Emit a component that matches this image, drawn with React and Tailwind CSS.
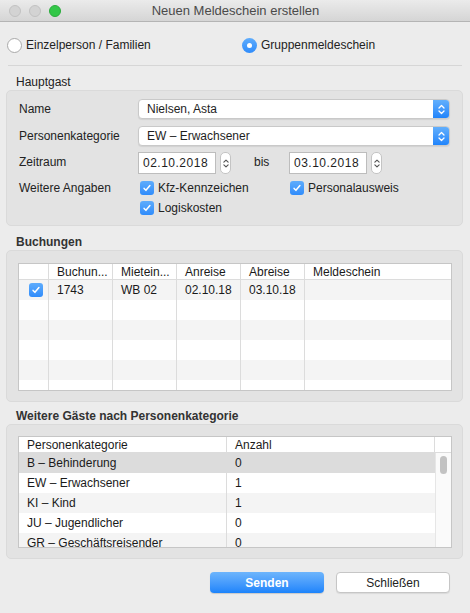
import React from "react";

// ICONS
const Check = () => (
  <svg viewBox="0 0 12 12" className="w-[10px] h-[10px]" fill="none" stroke="white" strokeWidth="1.8" strokeLinecap="round" strokeLinejoin="round">
    <path d="M2.5 6.5l2.2 2.3L9.5 3" />
  </svg>
);

const Checkbox = () => (
  <div className="w-[14px] h-[14px] rounded-[3px] bg-gradient-to-b from-[#5eacfc] to-[#2f8cfb] flex items-center justify-center shrink-0">
    <Check />
  </div>
);

const UpDown = ({ color = "white", className = "w-[7px] h-[11px]" }) => (
  <svg viewBox="0 0 7 11" className={className} fill="none" stroke={color} strokeWidth="1.3" strokeLinecap="round" strokeLinejoin="round">
    <path d="M1 4l2.5-2.5L6 4" />
    <path d="M1 7l2.5 2.5L6 7" />
  </svg>
);

const Select = ({ value }) => (
  <div className="w-[312px] h-[20px] bg-white rounded-[4px] border border-[#c9c9c9] shadow-[0_1px_1px_rgba(0,0,0,0.08)] flex items-center overflow-hidden">
    <span className="flex-1 pl-[8px] text-[12px] text-[#1e1e1e]">{value}</span>
    <div className="w-[16px] h-full bg-gradient-to-b from-[#62affc] to-[#1f84fb] flex items-center justify-center">
      <UpDown />
    </div>
  </div>
);

const DateField = ({ value }) => (
  <div className="flex items-center gap-[4px]">
    <div className="w-[78px] h-[22px] bg-white border border-[#bdbdbd] flex items-center pl-[4px] text-[12px] tracking-[0.5px] text-[#1e1e1e]">
      {value}
    </div>
    <div className="w-[11px] h-[22px] bg-white border border-[#c4c4c4] rounded-[5px] flex items-center justify-center">
      <UpDown color="#555" className="w-[6px] h-[11px]" />
    </div>
  </div>
);

const bookingCols = [
  { label: "", w: "w-[30px]" },
  { label: "Buchun...", w: "w-[64px]" },
  { label: "Mietein...", w: "w-[64px]" },
  { label: "Anreise", w: "w-[64px]" },
  { label: "Abreise", w: "w-[64px]" },
  { label: "Meldeschein", w: "flex-1" },
];

const guests = [
  ["B – Behinderung", "0"],
  ["EW – Erwachsener", "1"],
  ["KI – Kind", "1"],
  ["JU – Jugendlicher", "0"],
  ["GR – Geschäftsreisender", "0"],
];

export default function App() {
  return (
    <div className="w-[470px] h-[613px] bg-[#ececec] flex flex-col overflow-hidden text-[#222] font-['Liberation_Sans',Arial,sans-serif]">
      {/* TITLE BAR */}
      <header className="h-[22px] shrink-0 bg-gradient-to-b from-[#ebebeb] to-[#d5d5d5] border-b border-[#b4b4b4] flex items-center relative">
        <div className="flex items-center gap-[8px] pl-[9px]">
          <span className="w-[12px] h-[12px] rounded-full bg-[#d3d3d3] border border-[#c2c2c2]" />
          <span className="w-[12px] h-[12px] rounded-full bg-[#d3d3d3] border border-[#c2c2c2]" />
          <span className="w-[12px] h-[12px] rounded-full bg-[#33c748] border border-[#2aac3c]" />
        </div>
        <div className="flex-1 text-center text-[13px] text-[#4a4a4a] pr-[60px]">Neuen Meldeschein erstellen</div>
      </header>

      {/* RADIO ROW */}
      <div className="h-[43px] shrink-0 flex items-center pt-[3px] px-[7px] text-[12px]">
        <div className="flex items-center gap-[4px] w-[235px]">
          <span className="w-[15px] h-[15px] rounded-full bg-white border border-[#a9a9a9]" />
          <span>Einzelperson / Familien</span>
        </div>
        <div className="flex items-center gap-[4px]">
          <span className="w-[15px] h-[15px] rounded-full bg-gradient-to-b from-[#5eacfc] to-[#2f8cfb] flex items-center justify-center">
            <span className="w-[5px] h-[5px] rounded-full bg-white" />
          </span>
          <span>Gruppenmeldeschein</span>
        </div>
      </div>
      <div className="mx-[8px] border-t border-[#d6d6d6]" />

      {/* HAUPTGAST */}
      <div className="pl-[16px] mt-[9px] h-[15px] text-[12px] leading-[15px]">Hauptgast</div>
      <section className="mx-[6px] w-[457px] h-[136px] bg-[#e3e3e3] border border-[#dadada] rounded-[5px] pt-[8px] pl-[12px] text-[12px] leading-[14px]">
        <div className="flex items-center h-[20px]">
          <span className="w-[119px]">Name</span>
          <Select value="Nielsen, Asta" />
        </div>
        <div className="flex items-center h-[20px] mt-[7px]">
          <span className="w-[119px]">Personenkategorie</span>
          <Select value="EW – Erwachsener" />
        </div>
        <div className="flex items-center h-[22px] mt-[6px]">
          <span className="w-[119px] -mt-[2px]">Zeitraum</span>
          <DateField value="02.10.2018" />
          <span className="ml-[23px] w-[35px] -mt-[2px]">bis</span>
          <DateField value="03.10.2018" />
        </div>
        <div className="flex mt-[7px]">
          <span className="w-[119px]">Weitere Angaben</span>
          <div className="flex flex-col gap-[6px] pl-[2px]">
            <div className="flex items-center">
              <div className="flex items-center gap-[4px] w-[150px]">
                <Checkbox />
                <span>Kfz-Kennzeichen</span>
              </div>
              <div className="flex items-center gap-[4px]">
                <Checkbox />
                <span>Personalausweis</span>
              </div>
            </div>
            <div className="flex items-center gap-[4px]">
              <Checkbox />
              <span>Logiskosten</span>
            </div>
          </div>
        </div>
      </section>

      {/* BUCHUNGEN */}
      <div className="pl-[16px] mt-[9px] h-[15px] text-[12px] leading-[15px] font-bold text-[#333]">Buchungen</div>
      <section className="mx-[6px] w-[457px] h-[152px] bg-[#e3e3e3] border border-[#dadada] rounded-[5px] pt-[12px] px-[11px]">
        <div className="w-[434px] h-[128px] bg-white border border-[#c6c6c6] flex flex-col overflow-hidden text-[12px] text-[#1a1a1a]">
          <div className="h-[16px] shrink-0 flex border-b border-[#dcdcdc]">
            {bookingCols.map((c, i) => (
              <div key={i} className={`${c.w} h-full flex items-center ${i > 0 ? "pl-[8px]" : ""} ${i < 5 ? "border-r border-[#dcdcdc]" : ""}`}>
                {c.label}
              </div>
            ))}
          </div>
          <div className="flex-1 relative">
            {[0, 1, 2, 3, 4, 5].map((r) => (
              <div key={r} className={`h-[20px] ${r % 2 === 0 ? "bg-[#f4f4f4]" : "bg-white"}`} />
            ))}
            <div className="absolute inset-0 flex">
              {bookingCols.map((c, i) => (
                <div key={i} className={`${c.w} h-full ${i < 5 ? "border-r border-[#dcdcdc]" : ""} ${i > 0 ? "pl-[8px]" : "pl-[10px]"}`}>
                  <div className="h-[20px] flex items-center">
                    {i === 0 && <Checkbox />}
                    {i === 1 && "1743"}
                    {i === 2 && "WB 02"}
                    {i === 3 && "02.10.18"}
                    {i === 4 && "03.10.18"}
                  </div>
                </div>
              ))}
            </div>
          </div>
        </div>
      </section>

      {/* WEITERE GÄSTE */}
      <div className="pl-[16px] mt-[7px] h-[15px] text-[12px] leading-[15px] font-bold text-[#333]">Weitere Gäste nach Personenkategorie</div>
      <section className="mx-[6px] w-[457px] h-[135px] bg-[#e3e3e3] border border-[#dadada] rounded-[5px] pt-[11px] px-[11px]">
        <div className="w-[434px] h-[112px] bg-white border border-[#c6c6c6] flex flex-col overflow-hidden text-[12px] text-[#1a1a1a]">
          <div className="h-[16px] shrink-0 flex border-b border-[#dcdcdc]">
            <div className="w-[208px] pl-[8px] flex items-center border-r border-[#dcdcdc]">Personenkategorie</div>
            <div className="w-[208px] pl-[8px] flex items-center border-r border-[#dcdcdc]">Anzahl</div>
            <div className="flex-1" />
          </div>
          <div className="flex-1 flex">
            <div className="w-[416px] flex flex-col">
              {guests.map(([k, n], r) => (
                <div
                  key={r}
                  className={`h-[20px] shrink-0 flex ${r === 0 ? "bg-[#dcdcdc]" : r % 2 === 0 ? "bg-[#f4f4f4]" : "bg-white"}`}
                >
                  <div className="w-[208px] pl-[8px] flex items-center border-r border-[#dcdcdc]">{k}</div>
                  <div className="w-[208px] pl-[8px] flex items-center">{n}</div>
                </div>
              ))}
            </div>
            <div className="flex-1 border-l border-[#e6e6e6] bg-[#fafafa] pt-[3px] flex justify-center">
              <div className="w-[7px] h-[18px] rounded-full bg-[#c2c2c2]" />
            </div>
          </div>
        </div>
      </section>

      {/* BUTTONS */}
      <footer className="flex justify-end gap-[12px] pr-[20px] mt-[13px] text-[12px]">
        <button className="w-[114px] h-[21px] rounded-[4px] bg-gradient-to-b from-[#6db5fc] to-[#1b83fb] text-white font-semibold shadow-[0_1px_1px_rgba(0,0,0,0.15)]">
          Senden
        </button>
        <button className="w-[114px] h-[21px] rounded-[4px] bg-white border border-[#c6c6c6] text-[#222] shadow-[0_1px_1px_rgba(0,0,0,0.08)]">
          Schließen
        </button>
      </footer>
    </div>
  );
}
